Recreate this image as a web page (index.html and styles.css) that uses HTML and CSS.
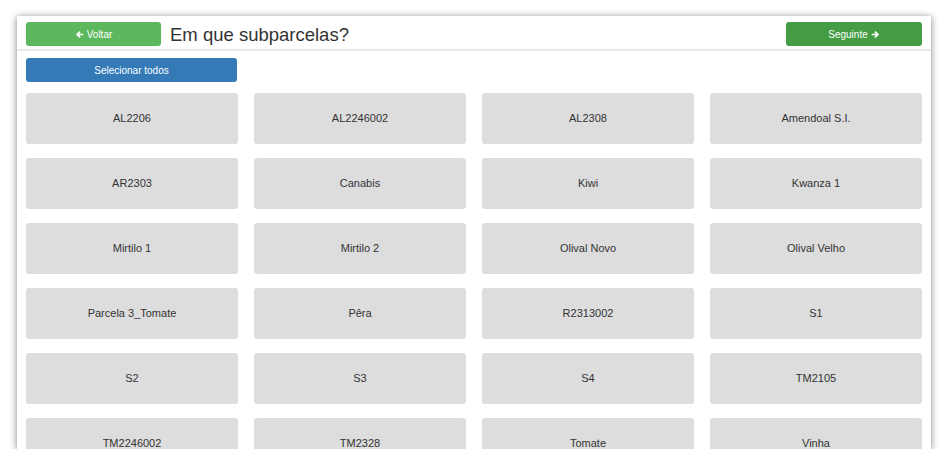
FILE: index.html
```
<!DOCTYPE html>
<html lang="pt">
<head>
  <meta charset="UTF-8">
  <meta name="viewport" content="width=device-width, initial-scale=1.0">
  <title>Subparcelas</title>
  <link rel="stylesheet" href="styles.css">
</head>
<body>
<div class="frame">
  <div class="topbar">
    <button class="btn btn-back">
      <svg class="arrow" viewBox="0 0 10 10"><path d="M1 5 L5 1.2 L6.3 2.5 L4.6 4.1 H9.2 V5.9 H4.6 L6.3 7.5 L5 8.8 Z"/></svg>Voltar
    </button>
    <h2 class="title">Em que subparcelas?</h2>
    <button class="btn btn-next">
      Seguinte<svg class="arrow" viewBox="0 0 10 10"><path d="M9 5 L5 1.2 L3.7 2.5 L5.4 4.1 H0.8 V5.9 H5.4 L3.7 7.5 L5 8.8 Z"/></svg>
    </button>
  </div>

  <div class="content">
    <button class="btn btn-all">Selecionar todos</button>

    <div class="grid">
      <div class="tile">AL2206</div>
      <div class="tile">AL2246002</div>
      <div class="tile">AL2308</div>
      <div class="tile">Amendoal S.I.</div>
      <div class="tile">AR2303</div>
      <div class="tile">Canabis</div>
      <div class="tile">Kiwi</div>
      <div class="tile">Kwanza 1</div>
      <div class="tile">Mirtilo 1</div>
      <div class="tile">Mirtilo 2</div>
      <div class="tile">Olival Novo</div>
      <div class="tile">Olival Velho</div>
      <div class="tile">Parcela 3_Tomate</div>
      <div class="tile">Pêra</div>
      <div class="tile">R2313002</div>
      <div class="tile">S1</div>
      <div class="tile">S2</div>
      <div class="tile">S3</div>
      <div class="tile">S4</div>
      <div class="tile">TM2105</div>
      <div class="tile">TM2246002</div>
      <div class="tile">TM2328</div>
      <div class="tile">Tomate</div>
      <div class="tile">Vinha</div>
    </div>
  </div>
</div>
</body>
</html>
```

FILE: styles.css
```
body {
    margin: 0;
    padding: 16px 0 0 17px;
    background: #fff;
    font-family: "Liberation Sans", Arial, sans-serif;
    color: #333;
}
.frame {
    width: 914px;
    height: 433px;
    overflow: hidden;
    background: #fff;
    box-shadow: 0 1px 7px rgba(0, 0, 0, 0.5);
}
.topbar {
    display: flex;
    align-items: center;
    height: 27px;
    padding: 6px 9px 0;
    border-bottom: 1px solid #e3e3e3;
    box-shadow: 0 1px 2px rgba(0, 0, 0, 0.08);
}
.title {
    flex: 1;
    margin: 0 0 2px 9px;
    font-size: 18.5px;
    font-weight: normal;
    color: #333;
}
.btn {
    display: flex;
    align-items: center;
    justify-content: center;
    gap: 3px;
    height: 24px;
    margin-bottom: 3px;
    padding: 0;
    border: none;
    border-radius: 3px;
    color: #fff;
    font-family: "Liberation Sans", Arial, sans-serif;
    font-size: 10px;
}
.btn-back {
    width: 135px;
    background: #5cb85c;
}
.btn-next {
    width: 136px;
    background: #449d44;
}
.arrow {
    width: 9px;
    height: 9px;
    fill: #fff;
}
.content {
    padding: 8px 9px 0;
}
.btn-all {
    width: 211px;
    height: 24px;
    margin: 0 0 11px;
    background: #337ab7;
}
.grid {
    display: grid;
    grid-template-columns: repeat(4, 212px);
    column-gap: 16px;
    row-gap: 14px;
}
.tile {
    display: flex;
    align-items: center;
    justify-content: center;
    height: 49px;
    padding-bottom: 2px;
    background: #ddd;
    border-radius: 3px;
    font-size: 11px;
    color: #333;
}
```
